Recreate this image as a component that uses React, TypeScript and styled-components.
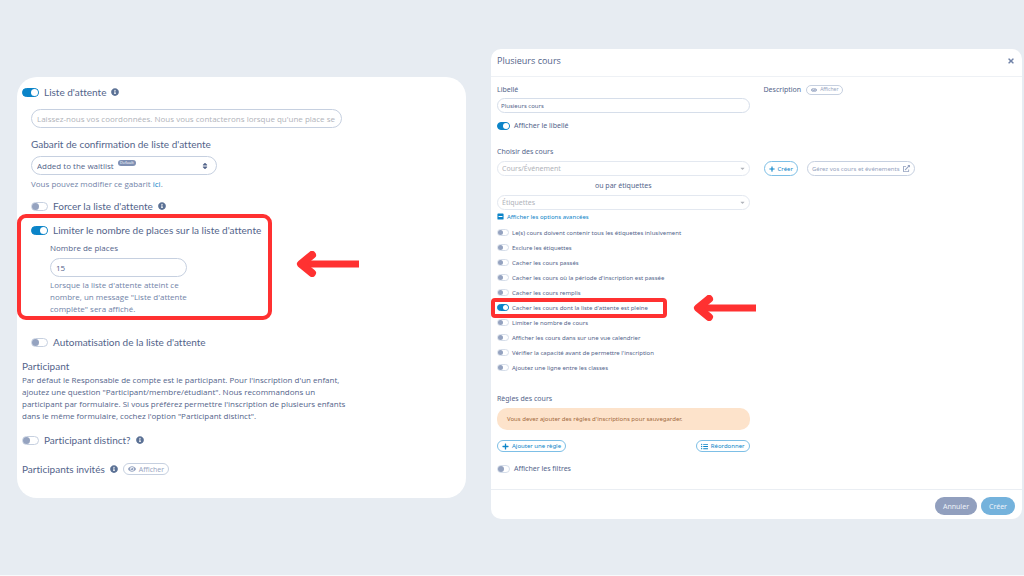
import React from 'react';
import styled, { createGlobalStyle, css } from 'styled-components';
import {
  FaCaretDown,
  FaExternalLinkAlt,
  FaEye,
  FaInfoCircle,
  FaListUl,
  FaMinusSquare,
  FaPlus,
  FaSort,
  FaTimes,
} from 'react-icons/fa';

const color = {
  page: '#e7ecf2',
  text: '#53648a',
  soft: '#7183a8',
  muted: '#95a3c0',
  placeholder: '#b0b3ba',
  border: '#c6d0e0',
  light: '#d6deea',
  faint: '#e3e8f0',
  primary: '#0b84c8',
  red: '#ff3131',
};

const font = {
  heading: 'Lato, "Liberation Sans", sans-serif',
  body: '"Open Sans", "Liberation Sans", sans-serif',
  modal: '"Noto Sans", "Liberation Sans", sans-serif',
};

const GlobalStyle = createGlobalStyle`
  * { box-sizing: border-box; }
  body {
    margin: 0;
    background: ${color.page};
    color: ${color.text};
    font-family: ${font.body};
    font-variant-ligatures: none;
  }
  h1, h2, p, ul { margin: 0; padding: 0; font-weight: 400; }
  ul { list-style: none; }
  button, input, select { font-family: inherit; margin: 0; }
  a { text-decoration: none; }
`;

const Page = styled.main`
  display: grid;
  grid-template-columns: 449fr 531fr;
  column-gap: 25px;
  align-items: start;
  min-height: 100vh;
  padding: 49px 2px 20px 17px;
  border-bottom: 1px solid #f8fafc;
`;

const WaitlistCard = styled.section`
  margin-top: 28px;
  padding: 8px 5px 22px;
  background: #fff;
  border-radius: 20px;
`;

const Indented = styled.div`
  padding-left: 9px;
`;

type Size = 'md' | 'sm' | 'xs';
const rowSize = {
  md: css`height: 14px; gap: 5px; font-family: ${font.heading}; font-size: 10px;`,
  sm: css`height: 11px; gap: 4px; font-size: 7px;`,
  xs: css`height: 11px; gap: 3px; font-size: 6px;`,
};
const Row = styled.div<{ $size?: Size; $top?: number }>`
  display: flex;
  align-items: center;
  white-space: nowrap;
  margin-top: ${(p) => p.$top ?? 0}px;
  ${(p) => rowSize[p.$size ?? 'md']}
`;

const switchSize = {
  md: css`width: 17px; height: 9px; --knob: 7px;`,
  sm: css`width: 13px; height: 8px; --knob: 6px;`,
  xs: css`width: 12px; height: 7px; --knob: 5px;`,
};
const Switch = styled.input.attrs({ type: 'checkbox' })<{ $size: Size }>`
  ${(p) => switchSize[p.$size]}
  appearance: none;
  flex: none;
  display: flex;
  align-items: center;
  border: 1px solid ${(p) => (p.$size === 'md' ? color.border : color.light)};
  border-radius: 5px;
  background: #fff;
  &::before {
    content: '';
    width: var(--knob);
    height: var(--knob);
    border-radius: 50%;
    background: ${color.muted};
  }
  &:checked {
    justify-content: flex-end;
    background: ${color.primary};
    border-color: ${color.primary};
  }
  &:checked::before { background: #fff; }
`;

const Info = styled(FaInfoCircle)`
  flex: none;
  width: 8px;
  height: 8px;
  color: #5b7195;
`;

const Field = styled.input<{ $compact?: boolean; $top?: number }>`
  display: block;
  width: 100%;
  height: ${(p) => (p.$compact ? 15 : 19)}px;
  margin-top: ${(p) => p.$top ?? 0}px;
  padding: 0 ${(p) => (p.$compact ? 3 : 5)}px;
  border: 1px solid ${(p) => (p.$compact ? color.light : color.border)};
  border-radius: 10px;
  background: #fff;
  color: ${color.text};
  font-size: ${(p) => (p.$compact ? 6 : 8)}px;
  &::placeholder { color: ${color.placeholder}; }
`;
const MessageField = styled(Field)`
  width: 311px;
  max-width: 100%;
`;
const CountField = styled(Field)`
  width: 137px;
`;

const Picker = styled.div<{ $top: number }>`
  position: relative;
  display: flex;
  align-items: center;
  margin-top: ${(p) => p.$top}px;
`;
const TemplatePicker = styled(Picker)`
  width: 186px;
`;
const Select = styled.select<{ $compact?: boolean }>`
  appearance: none;
  width: 100%;
  height: ${(p) => (p.$compact ? 15 : 19)}px;
  padding: 0 ${(p) => (p.$compact ? 4 : 5)}px;
  border: 1px solid ${(p) => (p.$compact ? color.faint : color.border)};
  border-radius: 10px;
  background: #fff;
  color: ${(p) => (p.$compact ? color.placeholder : color.text)};
  font-size: ${(p) => (p.$compact ? 7 : 8)}px;
`;
const SortMark = styled(FaSort)`
  position: absolute;
  right: 8px;
  width: 8px;
  height: 8px;
  pointer-events: none;
`;
const CaretMark = styled(FaCaretDown)`
  position: absolute;
  right: 4px;
  width: 7px;
  height: 7px;
  color: ${color.placeholder};
  pointer-events: none;
`;
const DefaultBadge = styled.span`
  position: absolute;
  left: 87px;
  top: 4px;
  padding: 0 2px;
  border-radius: 4px;
  background: #7f90b3;
  color: #fff;
  font-size: 4px;
  line-height: 6px;
  pointer-events: none;
`;

const Label = styled.label<{ $top?: number }>`
  display: block;
  margin-top: ${(p) => p.$top ?? 0}px;
  font-family: ${font.heading};
  font-size: 10px;
  line-height: 14px;
`;
const SmallLabel = styled.label`
  display: block;
  font-size: 8px;
  line-height: 12px;
`;
const Help = styled.p<{ $top?: number }>`
  margin-top: ${(p) => p.$top ?? 0}px;
  color: ${color.soft};
  font-size: 8px;
  line-height: 12px;
  a { color: ${color.primary}; }
`;

const LimitSection = styled.div`
  position: relative;
  margin-top: 10px;
`;
const LimitDetails = styled.div`
  padding: 5px 0 0 19px;
`;
const LimitHelp = styled(Help)`
  width: 144px;
`;

const Highlight = styled.div<{ $small?: boolean }>`
  position: absolute;
  pointer-events: none;
  border-style: solid;
  border-color: ${color.red};
  ${(p) =>
    p.$small
      ? css`top: -4px; bottom: -5px; left: -6px; width: 176px; border-width: 4px; border-radius: 4px;`
      : css`top: -9px; bottom: -5px; left: -14px; width: 255px; border-width: 4px; border-radius: 9px;`}
  svg {
    position: absolute;
    top: calc(50% - ${(p) => (p.$small ? 13 : 16)}px);
    left: calc(100% + ${(p) => (p.$small ? 30 : 28)}px);
  }
`;

const SectionTitle = styled.h2`
  margin-top: 10px;
  font-family: ${font.heading};
  font-size: 10px;
  line-height: 14px;
`;
const Paragraph = styled.p`
  margin-top: 1px;
  width: 324px;
  max-width: 100%;
  font-size: 8px;
  line-height: 12px;
`;

const buttonTone = {
  muted: css`color: ${color.muted}; border-color: ${color.border};`,
  primary: css`color: ${color.primary}; border-color: #7dbfe6;`,
};
const PillButton = styled.button<{ $tone?: 'muted' | 'primary'; $height?: number; $font?: number }>`
  display: inline-flex;
  align-items: center;
  justify-content: center;
  gap: 3px;
  height: ${(p) => p.$height ?? 12}px;
  padding: 0 4px;
  border: 1px solid;
  border-radius: 8px;
  background: #fff;
  font-size: ${(p) => p.$font ?? 6}px;
  line-height: 1;
  white-space: nowrap;
  ${(p) => buttonTone[p.$tone ?? 'muted']}
  svg { flex: none; }
`;
const GuestRow = styled(Row)`
  ${PillButton} {
    font-family: ${font.body};
  }
`;

const Modal = styled.section`
  background: #fff;
  border-radius: 10px;
  font-family: ${font.modal};
`;
const ModalHeader = styled.header`
  display: flex;
  align-items: center;
  justify-content: space-between;
  height: 28px;
  padding: 0 6px 3px;
  border-bottom: 1px solid #eef1f5;
`;
const ModalTitle = styled.h1`
  font-family: ${font.body};
  font-size: 9px;
  font-weight: 500;
  line-height: 12px;
`;
const CloseButton = styled.button`
  display: flex;
  padding: 1px;
  border: 0;
  background: none;
  color: ${color.soft};
`;
const ModalBody = styled.div`
  display: grid;
  grid-template-columns: 1fr 1fr;
  column-gap: 14px;
  padding: 7px 6px 15px;
`;
const Column = styled.div`
  min-width: 0;
`;
const FieldLabel = styled.label`
  display: block;
  font-size: 7px;
  line-height: 11px;
`;
const GroupTitle = styled.h2<{ $top?: number }>`
  margin-top: ${(p) => p.$top ?? 0}px;
  font-size: 7px;
  line-height: 11px;
`;
const DescriptionRow = styled.div`
  display: flex;
  align-items: center;
  gap: 5px;
  height: 11px;
  font-size: 7px;
`;
const ActionRow = styled.div`
  display: flex;
  gap: 9px;
  padding-top: 30px;
`;
const Or = styled.p`
  margin-top: 4px;
  font-size: 7px;
  line-height: 11px;
  text-align: center;
`;
const AdvancedToggle = styled.button`
  display: flex;
  align-items: center;
  gap: 3px;
  height: 11px;
  margin-top: 1px;
  padding: 0;
  border: 0;
  background: none;
  color: ${color.primary};
  font-size: 6px;
`;
const OptionList = styled.ul`
  display: grid;
  row-gap: 4px;
  margin-top: 5px;
`;
const Option = styled.li`
  position: relative;
`;
const Alert = styled.p`
  margin-top: 4px;
  padding: 5px 10px;
  border-radius: 10px;
  background: #fde3cb;
  color: #a2693c;
  font-size: 6px;
  line-height: 12px;
`;
const RuleActions = styled.div`
  display: flex;
  justify-content: space-between;
  margin-top: 10px;
`;
const ModalFooter = styled.footer`
  display: flex;
  justify-content: flex-end;
  gap: 4px;
  padding: 7px 7px 4px;
  border-top: 1px solid #eaeef3;
`;
const SolidButton = styled.button<{ $primary?: boolean }>`
  height: 18px;
  padding: 0 8px;
  border: 0;
  border-radius: 9px;
  background: ${(p) => (p.$primary ? '#74b2dc' : '#919fbe')};
  color: #eef3f9;
  font-size: 7px;
`;

const Arrow = () => (
  <svg width="64" height="26" viewBox="0 0 64 26" fill="none" stroke={color.red} aria-hidden="true">
    <path d="M6 13H63" strokeWidth="7" />
    <path d="M16 4L5 13L16 22" strokeWidth="8" strokeLinecap="round" strokeLinejoin="round" />
  </svg>
);

interface ToggleProps {
  id: string;
  label: string;
  on?: boolean;
  info?: boolean;
  size?: Size;
  top?: number;
}
const Toggle = ({ id, label, on, info, size = 'md', top }: ToggleProps) => (
  <Row $size={size} $top={top}>
    <Switch id={id} $size={size} defaultChecked={on} />
    <label htmlFor={id}>{label}</label>
    {info && <Info />}
  </Row>
);

const options = [
  'Le(s) cours doivent contenir tous les étiquettes inlusivement',
  'Exclure les étiquettes',
  'Cacher les cours passés',
  "Cacher les cours où la période d'inscription est passée",
  'Cacher les cours remplis',
  "Cacher les cours dont la liste d'attente est pleine",
  'Limiter le nombre de cours',
  'Afficher les cours dans sur une vue calendrier',
  "Vérifier la capacité avant de permettre l'inscription",
  'Ajoutez une ligne entre les classes',
];
const activeOption = 5;

const WaitlistPanel = () => (
  <WaitlistCard>
    <Toggle id="waitlist" label="Liste d'attente" on info />
    <Indented>
      <MessageField
        $top={10}
        aria-label="Message de la liste d'attente"
        placeholder="Laissez-nous vos coordonnées. Nous vous contacterons lorsque qu'une place se libère."
      />
      <Label htmlFor="template" $top={9}>Gabarit de confirmation de liste d'attente</Label>
      <TemplatePicker $top={5}>
        <Select id="template">
          <option>Added to the waitlist</option>
        </Select>
        <DefaultBadge>Default</DefaultBadge>
        <SortMark />
      </TemplatePicker>
      <Help $top={3}>
        Vous pouvez modifier ce gabarit <a href="#gabarit">ici</a>.
      </Help>
      <Toggle id="force" label="Forcer la liste d'attente" info top={9} />
      <LimitSection>
        <Toggle id="limit" label="Limiter le nombre de places sur la liste d'attente" on />
        <LimitDetails>
          <SmallLabel htmlFor="places">Nombre de places</SmallLabel>
          <CountField id="places" $top={4} defaultValue="15" />
          <LimitHelp $top={2}>
            Lorsque la liste d'attente atteint ce nombre, un message "Liste d'attente complète" sera affiché.
          </LimitHelp>
        </LimitDetails>
        <Highlight><Arrow /></Highlight>
      </LimitSection>
      <Toggle id="auto" label="Automatisation de la liste d'attente" top={20} />
    </Indented>
    <SectionTitle>Participant</SectionTitle>
    <Paragraph>
      Par défaut le Responsable de compte est le participant. Pour l'inscription d'un enfant, ajoutez une
      question "Participant/membre/étudiant". Nous recommandons un participant par formulaire. Si vous
      préférez permettre l'inscription de plusieurs enfants dans le même formulaire, cochez l'option
      "Participant distinct".
    </Paragraph>
    <Toggle id="distinct" label="Participant distinct?" info top={11} />
    <GuestRow $top={15}>
      <span>Participants invités</span>
      <Info />
      <PillButton $font={7}><FaEye size={8} />Afficher</PillButton>
    </GuestRow>
  </WaitlistCard>
);

const CoursesModal = () => (
  <Modal>
    <ModalHeader>
      <ModalTitle>Plusieurs cours</ModalTitle>
      <CloseButton aria-label="Fermer"><FaTimes size={8} /></CloseButton>
    </ModalHeader>
    <ModalBody>
      <Column>
        <FieldLabel htmlFor="name">Libellé</FieldLabel>
        <Field id="name" $compact $top={3} defaultValue="Plusieurs cours" />
        <Toggle id="show-label" label="Afficher le libellé" on size="sm" top={7} />
      </Column>
      <Column>
        <DescriptionRow>
          <span>Description</span>
          <PillButton $height={10} $font={5}><FaEye size={6} />Afficher</PillButton>
        </DescriptionRow>
      </Column>
      <Column>
        <GroupTitle $top={15}>Choisir des cours</GroupTitle>
        <Picker $top={4}>
          <Select $compact aria-label="Cours/Événement"><option>Cours/Événement</option></Select>
          <CaretMark />
        </Picker>
        <Or>ou par étiquettes</Or>
        <Picker $top={4}>
          <Select $compact aria-label="Étiquettes"><option>Étiquettes</option></Select>
          <CaretMark />
        </Picker>
        <AdvancedToggle><FaMinusSquare size={7} />Afficher les options avancées</AdvancedToggle>
        <OptionList>
          {options.map((label, i) => (
            <Option key={label}>
              <Toggle id={`option-${i}`} label={label} on={i === activeOption} size="xs" />
              {i === activeOption && <Highlight $small><Arrow /></Highlight>}
            </Option>
          ))}
        </OptionList>
        <GroupTitle $top={20}>Règles des cours</GroupTitle>
        <Alert>Vous devez ajouter des règles d'inscriptions pour sauvegarder.</Alert>
        <RuleActions>
          <PillButton $tone="primary"><FaPlus size={7} />Ajouter une règle</PillButton>
          <PillButton $tone="primary"><FaListUl size={7} />Réordonner</PillButton>
        </RuleActions>
        <Toggle id="filters" label="Afficher les filtres" size="sm" top={11} />
      </Column>
      <Column>
        <ActionRow>
          <PillButton $tone="primary" $height={15}><FaPlus size={6} />Créer</PillButton>
          <PillButton $height={15}>Gérez vos cours et événements<FaExternalLinkAlt size={7} /></PillButton>
        </ActionRow>
      </Column>
    </ModalBody>
    <ModalFooter>
      <SolidButton>Annuler</SolidButton>
      <SolidButton $primary>Créer</SolidButton>
    </ModalFooter>
  </Modal>
);

export default function App() {
  return (
    <>
      <GlobalStyle />
      <Page>
        <WaitlistPanel />
        <CoursesModal />
      </Page>
    </>
  );
}
